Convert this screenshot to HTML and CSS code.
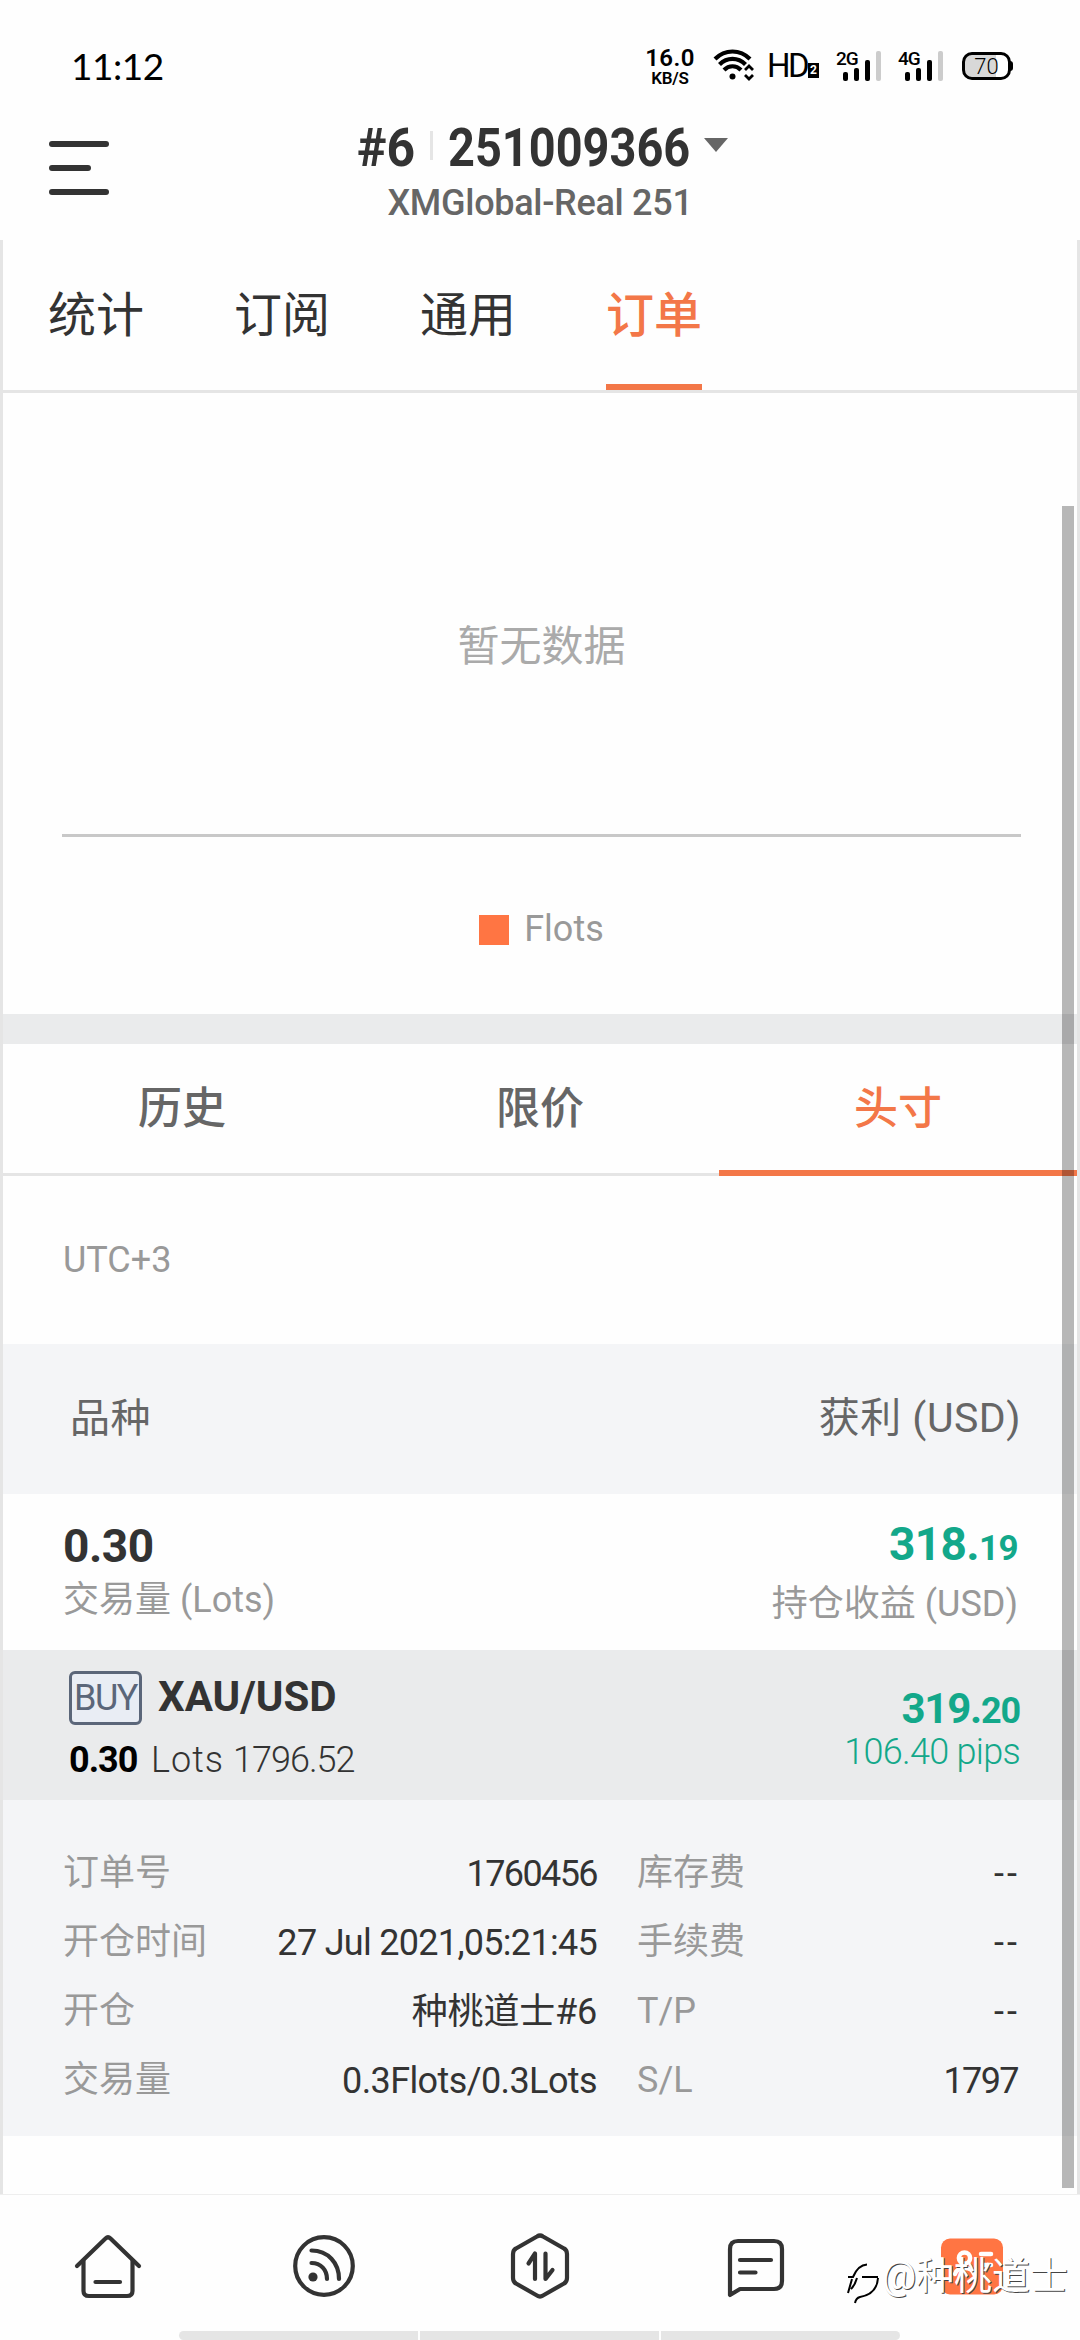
FILE: index.html
```html
<!DOCTYPE html>
<html lang="zh-CN">
<head>
<meta charset="utf-8">
<title>订单</title>
<link rel="stylesheet" href="styles.css">
</head>
<body>
<div class="status">
  <div class="clock">11:12</div>
  <div class="speed"><b>16.0</b><span>KB/S</span></div>
  <svg class="wifi" width="42" height="34" viewBox="0 0 42 34" fill="none" stroke="#000" stroke-width="4.2">
    <path d="M2 11C12 1 27 1 37 11"/><path d="M6.500 16.500C14 9 25 9 32.500 16.500"/><path d="M11 22C16 17 23 17 28 22"/>
    <circle cx="19.500" cy="28.500" r="3" fill="#000" stroke="none"/>
    <path d="M32 22l4-4 4 4M32 27l4 4 4-4" stroke-width="2.800"/>
  </svg>
  <div class="hd">HD<i>2</i></div>
  <div class="signal"><span>2G</span><i class="b1"></i><i class="b2"></i><i class="b3"></i><i class="b4"></i></div>
  <div class="signal second"><span>4G</span><i class="b1"></i><i class="b2"></i><i class="b3"></i><i class="b4"></i></div>
  <div class="battery"><span>70</span></div>
</div>

<header class="header">
  <div class="menu"><i></i><i></i><i></i></div>
  <div class="account">
    <div class="account-line"><b class="tag">#6</b><i class="sep"></i><b class="number">251009366</b><i class="caret"></i></div>
    <div class="server">XMGlobal-Real 251</div>
  </div>
</header>

<main class="panel">
  <nav class="tabs"><a>统计</a><a>订阅</a><a>通用</a><a class="active">订单</a></nav>
  <section class="chart">
    <p class="empty">暂无数据</p>
    <div class="legend"><i></i><span>Flots</span></div>
  </section>
  <nav class="subtabs"><a>历史</a><a>限价</a><a class="active">头寸</a></nav>
  <div class="zone">UTC+3</div>
  <div class="columns"><span>品种</span><span>获利 (USD)</span></div>
  <div class="totals">
    <div><b>0.30</b><span>交易量 (Lots)</span></div>
    <div class="right"><b class="gain">318.<small>19</small></b><span>持仓收益 (USD)</span></div>
  </div>
  <div class="position">
    <div>
      <div class="symbol"><span class="buy">BUY</span><b>XAU/USD</b></div>
      <div class="lots"><b>0.30</b><span class="unit">Lots</span><span class="price">1796.52</span></div>
    </div>
    <div class="result">
      <b>319.<small>20</small></b>
      <span>106.40 pips</span>
    </div>
  </div>
  <dl class="details">
    <dt>订单号</dt><dd class="order">1760456</dd><dt class="second">库存费</dt><dd class="none">--</dd>
    <dt>开仓时间</dt><dd class="time">27 Jul 2021,05:21:45</dd><dt class="second">手续费</dt><dd class="none">--</dd>
    <dt>开仓</dt><dd class="name">种桃道士#6</dd><dt class="second">T/P</dt><dd class="none">--</dd>
    <dt>交易量</dt><dd class="vol">0.3Flots/0.3Lots</dd><dt class="second">S/L</dt><dd class="order">1797</dd>
  </dl>
  <div class="scrollbar"></div>
</main>

<footer class="dock">
  <svg viewBox="0 0 72 72"><g><path d="M5 37L33.500 9.500Q36 7 38.500 9.500L67 37"/><path d="M11.500 32V62Q11.500 67 17 67H55Q60.500 67 60.500 62V32"/><path d="M23.500 53H48"/></g></svg>
  <svg viewBox="0 0 72 72"><circle cx="36" cy="37" r="28.800"/><path d="M23.500 21.500C40 21.500 51 34 51 50M23.500 34C33 34 39 41 39 50"/><circle cx="25" cy="48" r="4.600" class="solid"/></svg>
  <svg viewBox="0 0 72 72"><path d="M33 7.500Q36 5.500 39 7.500L60 19.500Q63 21 63 25V49Q63 53 60 54.500L39 66.500Q36 68.500 33 66.500L12 54.500Q9 53 9 49V25Q9 21 12 19.500Z"/><path d="M24.500 34.500L31 24.500V50M41.500 24.500V50L48.500 41"/></svg>
  <svg viewBox="0 0 72 72"><path d="M10 66V20Q10 12 18 12H54Q62 12 62 20V52Q62 60 54 60H20Z"/><path d="M20 31H51M20 43.500H35.500"/></svg>
  <svg viewBox="0 0 72 72" class="me"><rect x="5" y="9.500" width="62" height="56" rx="9"/><g><circle cx="28.500" cy="29" r="5.600"/><path d="M19 45C21 37 36 37 38 45M45 25H55M47 36H55"/></g></svg>
</footer>
<div class="gesture"><i></i><i></i><i></i></div>
<div class="watermark">
  <svg width="34" height="42" viewBox="0 0 34 42" fill="none" stroke="#000" stroke-width="2"><path d="M1 15H6Q11 3 20 2.500M15 15H31M5 17L1 31M10 16Q8 23 4 27M31 16Q30 32 13 35Q9 36 8 41"/></svg>
  <span>@种桃道士</span>
</div>
</body>
</html>
```
FILE: styles.css
```css
* { box-sizing: border-box; }
body {
  margin: 0;
  width: 1080px;
  height: 2340px;
  position: relative;
  overflow: hidden;
  background: #fefefe;
  color: #333;
  font-family: Roboto, "Noto Sans CJK SC", sans-serif;
  font-size: 36px;
  display: flex;
  flex-direction: column;
}
i { font-style: normal; display: block; }
b { font-weight: 700; }
p, dl, dd { margin: 0; }

.status { height: 108px; padding: 48px 68px 0 71px; display: flex; color: #000; flex: none; }
.clock { font-family: Lato, sans-serif; font-size: 37px; line-height: 35px; letter-spacing: -.5px; width: 575px; }
.speed { display: flex; flex-direction: column; align-items: center; width: 48px; margin-right: 19px; }
.speed b { font-size: 24px; line-height: 20px; font-weight: 600; letter-spacing: .4px; }
.speed span { font-size: 17px; line-height: 18px; margin-top: 1px; font-weight: 600; letter-spacing: -.2px; }
.wifi { flex: none; }
.hd { display: flex; font-size: 33px; line-height: 36px; letter-spacing: -2.600px; margin-left: 12px; width: 70px; }
.hd i { width: 11px; height: 15px; margin: 15px 0 0 1px; background: #000; color: #fff; font-size: 12px; line-height: 15px; font-weight: 700; letter-spacing: 0; text-align: center; flex: none; }
.signal { position: relative; width: 62px; height: 34px; display: flex; align-items: flex-end; gap: 6px; padding: 0 0 1px 6px; flex: none; }
.signal span { position: absolute; left: -1px; top: 1px; font-size: 19px; line-height: 19px; font-weight: 500; letter-spacing: -1px; }
.signal i { width: 5px; border-radius: 2px; background: #000; }
.signal .b1 { height: 9px; }
.signal .b2 { height: 13px; }
.signal .b3 { height: 21px; }
.signal .b4 { height: 30px; background: #ccc; }
.battery { position: relative; width: 49px; height: 28px; margin: 4px 0 0 1px; border: 3px solid #000; border-radius: 10px; background: linear-gradient(90deg, #d8d8d8 31px, #fff 31px); text-align: center; font-size: 22px; line-height: 23px; font-weight: 300; flex: none; }
.battery::after { content: ""; position: absolute; right: -5px; top: 6px; width: 3px; height: 10px; border-radius: 0 3px 3px 0; background: #000; }

.header { height: 132px; display: flex; flex: none; padding: 0 49px; }
.menu { width: 60px; padding-top: 33px; display: flex; flex-direction: column; gap: 18px; flex: none; }
.menu i { height: 6px; border-radius: 3px; background: #333; }
.menu i:nth-child(2) { width: 42px; }
.account { width: 862px; display: flex; flex-direction: column; align-items: center; flex: none; }
.account-line { display: flex; width: 368px; height: 76px; padding: 8px 0 0 1px; line-height: 64px; }
.account-line b { font-size: 53px; transform-origin: 0 50%; flex: none; }
.tag { width: 73px; transform: scaleX(.94); }
.number { width: 255px; transform: scaleX(.885); white-space: nowrap; }
.sep { width: 3px; height: 29px; margin: 15px 15px 0 0; background: #e5e5e5; flex: none; }
.caret { border: 12px solid transparent; border-top: 14px solid #666; border-bottom: 0; height: 14px; margin: 22px 0 0 1px; flex: none; }
.server { font-size: 36px; line-height: 40px; margin-top: -1px; font-weight: 500; color: #666; letter-spacing: -.3px; }

.panel { position: relative; flex: none; height: 1954px; border: solid #e5e5e5; border-width: 0 3px; }
.tabs { height: 153px; padding-left: 45px; display: flex; gap: 90px; border-bottom: 3px solid #e5e5e5; font-size: 48px; line-height: 151px; }
.tabs a { height: 150px; }
.tabs .active { color: #f37748; font-weight: 500; border-bottom: 6px solid #f37748; }
.chart { height: 651px; padding: 0 56px 0 59px; border-bottom: 30px solid #eaebec; }
.empty { height: 444px; padding-top: 224px; border-bottom: 3px solid #c8c8c8; text-align: center; font-size: 42px; line-height: 60px; color: #aaa; }
.legend { display: flex; justify-content: center; align-items: center; gap: 15px; height: 186px; color: #999; font-size: 36px; }
.legend i { width: 30px; height: 30px; background: #ff7543; }
.legend span { margin-top: -3px; }
.subtabs { height: 132px; display: flex; border-bottom: 3px solid #e5e5e5; font-size: 44px; line-height: 130px; font-weight: 500; color: #666; }
.subtabs a { flex: 1; text-align: center; height: 132px; }
.subtabs .active { color: #f37748; border-bottom: 6px solid #f37748; }
.zone { height: 168px; padding-left: 60px; line-height: 168px; color: #999; }
.columns { height: 150px; padding: 0 56px 0 67px; display: flex; justify-content: space-between; background: #f4f5f7; color: #666; font-size: 40px; line-height: 149px; letter-spacing: .6px; }
.columns span:last-child { font-size: 41px; letter-spacing: .5px; }
.totals { height: 156px; padding: 24px 59px 0 60px; display: flex; justify-content: space-between; color: #999; }
.totals div { display: flex; flex-direction: column; }
.totals b { font-size: 46px; line-height: 56px; color: #333; letter-spacing: -.5px; }
.totals span { line-height: 53px; }
.totals .right { align-items: flex-end; margin-top: -2px; }
.totals .gain { color: #13a88a; letter-spacing: -.6px; }
.totals small { font-size: 35px; }
.totals .right span { margin-top: 1px; }
.position { height: 150px; padding: 21px 57px 0 66px; display: flex; justify-content: space-between; background: #eaebec; }
.symbol { display: flex; gap: 16px; height: 54px; }
.symbol b { font-size: 42px; line-height: 52px; }
.buy { width: 73px; height: 54px; border: 3px solid #5b6679; border-radius: 6px; background: #e9edf4; color: #5b6679; text-align: center; line-height: 48px; letter-spacing: -1.400px; }
.lots { display: flex; line-height: 42px; margin-top: 14px; font-weight: 300; }
.lots b { color: #000; letter-spacing: -1px; width: 82px; }
.unit { letter-spacing: 1px; width: 82px; }
.price { letter-spacing: -1px; }
.result { display: flex; flex-direction: column; align-items: flex-end; color: #13a88a; font-weight: 300; }
.result b { font-size: 42px; line-height: 48px; margin-top: 14px; letter-spacing: -1.200px; }
.result small { font-size: 36px; }
.result span { line-height: 38px; margin-top: -2px; letter-spacing: -.7px; }
.details { height: 336px; padding: 39px 59px 0 60px; display: grid; grid-template-columns: 150px 384px 149px 272px; grid-auto-rows: 69px; line-height: 69px; background: #f4f5f7; color: #333; }
.details dt { color: #999; }
.details .second { padding-left: 40px; }
.details dd { text-align: right; white-space: nowrap; padding-top: 1px; }
.details .order { letter-spacing: -1.600px; }
.details .time { letter-spacing: -.700px; }
.details .vol { letter-spacing: -.600px; }
.details .name { letter-spacing: -.200px; }
.details .none { letter-spacing: 3px; margin-right: -2px; }
.scrollbar { position: absolute; left: 1059px; top: 266px; width: 12px; height: 1682px; background: rgba(0, 0, 0, .28); }

.dock { height: 146px; border-top: 1px solid #eee; display: flex; justify-content: space-around; padding-top: 34px; flex: none; }
.dock svg { width: 72px; height: 72px; fill: none; stroke: #333; stroke-width: 4.200; stroke-linecap: round; stroke-linejoin: round; }
.dock .solid { fill: #333; stroke: none; }
.dock .me rect { fill: #ff7543; stroke: none; }
.dock .me g { stroke: #fff; stroke-width: 4.500; }
.gesture { position: absolute; left: 179px; top: 2331px; width: 721px; height: 9px; display: flex; gap: 2px; }
.gesture i { flex: 1; background: #e5e5e5; }
.gesture i:first-child { border-radius: 5px 0 0 5px; }
.gesture i:last-child { border-radius: 0 5px 5px 0; }
.watermark { position: absolute; left: 847px; top: 2248px; display: flex; align-items: flex-start; color: #fff; font-size: 38px; line-height: 56px; text-shadow: 1px 1px 0 #444; white-space: nowrap; }
.watermark svg { margin: 14px 1px 0 0; }
```
